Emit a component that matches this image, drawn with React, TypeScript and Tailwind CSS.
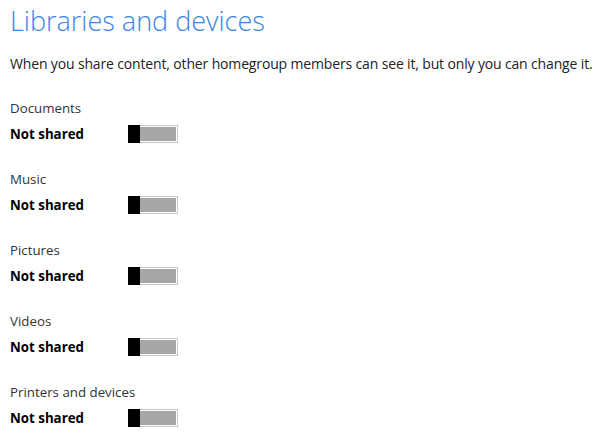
import React from "react";

function Toggle() {
  return (
    <div className="relative w-[50px] h-[18px]">
      <div className="absolute inset-0 border border-[#c8c8c8] bg-white p-[1px]">
        <div className="w-full h-full bg-[#a6a6a6]" />
      </div>
      <div className="absolute left-0 top-0 w-[12px] h-[18px] bg-black" />
    </div>
  );
}

const items = ["Documents", "Music", "Pictures", "Videos", "Printers and devices"];

export default function App() {
  return (
    <div
      className="w-[600px] h-[436px] bg-white overflow-hidden pl-[10px]"
      style={{ fontFamily: '"Open Sans", "Noto Sans", sans-serif' }}
    >
      <h1 className="text-[27px] font-light text-[#3a85e3] leading-[36px] pt-[3px]">
        Libraries and devices
      </h1>
      <p className="mt-[15px] text-[14px] text-[#222] leading-[20px] tracking-[-0.15px]">
        When you share content, other homegroup members can see it, but only you can change it.
      </p>
      <div className="mt-[24px] flex flex-col gap-[25px]">
        {items.map((name) => (
          <div key={name} className="flex flex-col">
            <div className="text-[13.3px] text-[#333] leading-[20px]">{name}</div>
            <div className="flex items-center mt-[6px] h-[20px]">
              <div className="w-[118px] text-[13.3px] font-bold text-black leading-[20px]">Not shared</div>
              <Toggle />
            </div>
          </div>
        ))}
      </div>
    </div>
  );
}
